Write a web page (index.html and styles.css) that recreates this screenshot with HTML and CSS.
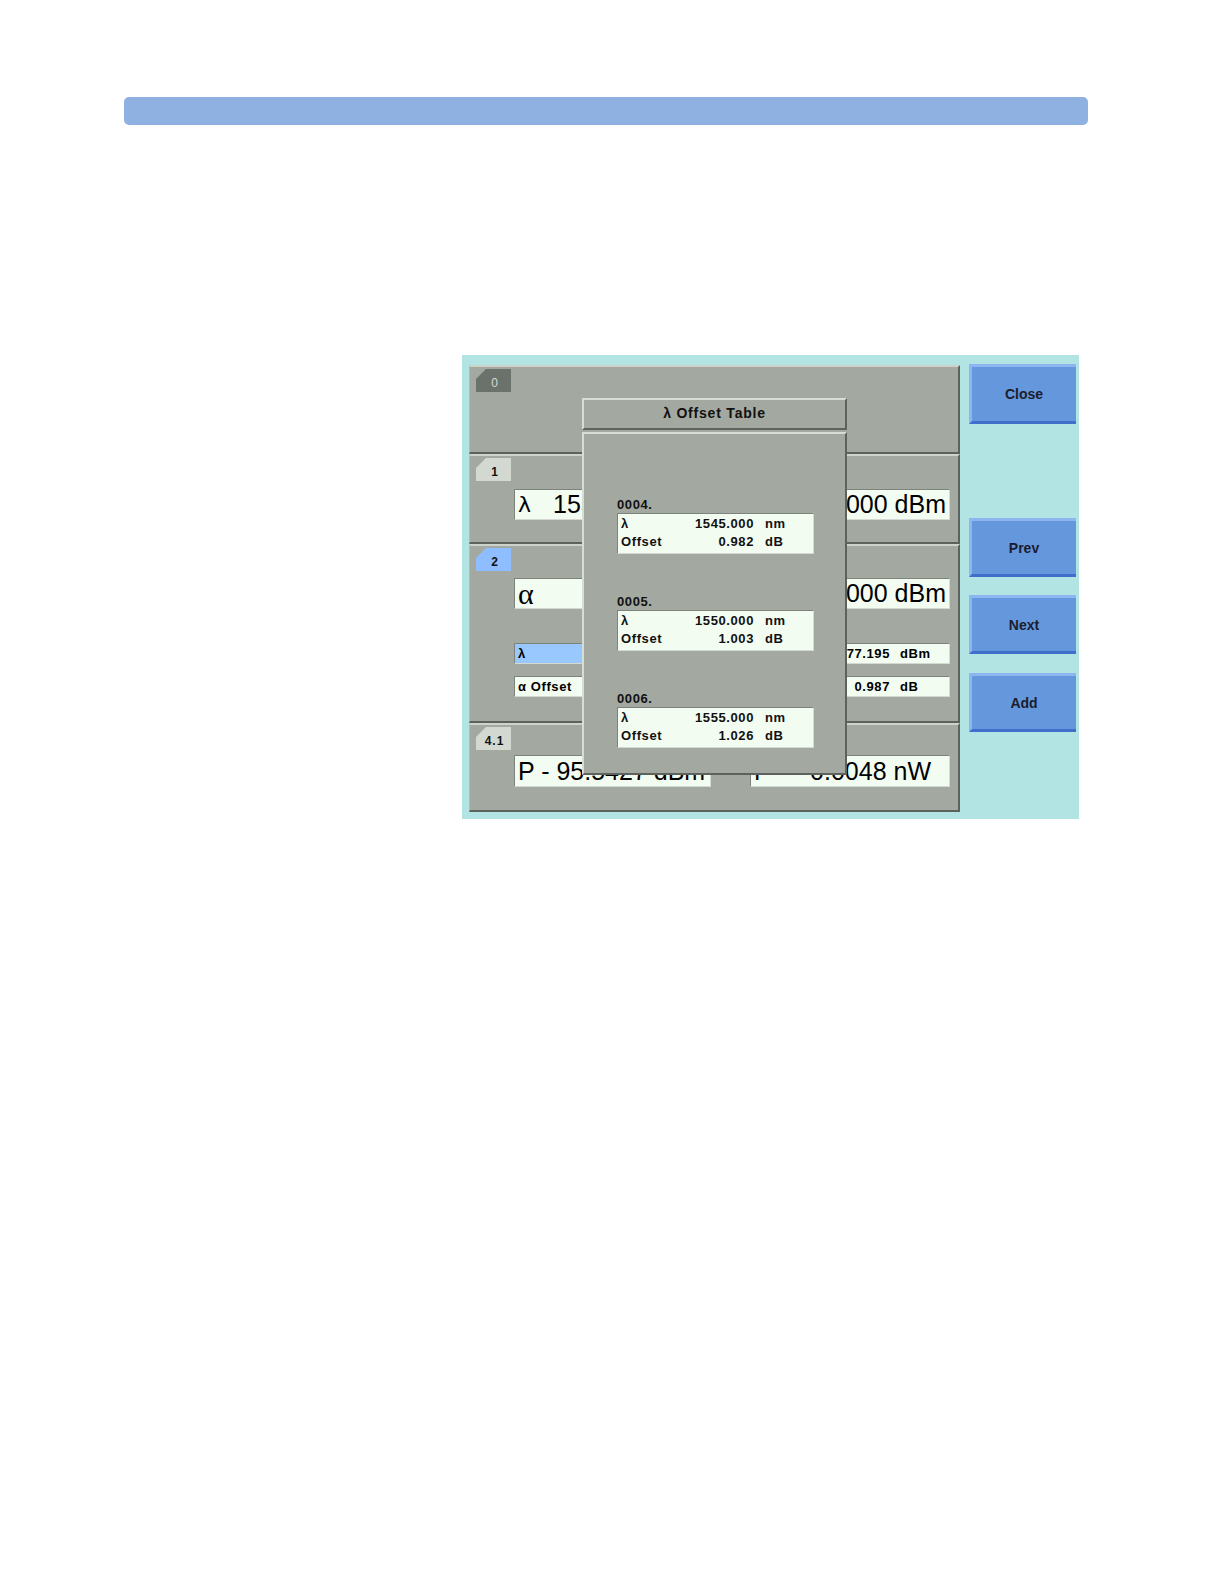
FILE: index.html
```html
<!DOCTYPE html>
<html>
<head>
<meta charset="utf-8">
<title>λ Offset Table</title>
<link rel="stylesheet" href="styles.css">
</head>
<body>
<div class="topbar"></div>

<div class="screen">
  <div class="panels">
    <div class="panel p0">
      <div class="tab tab-dark">0</div>
    </div>

    <div class="panel p1">
      <div class="tab tab-light">1</div>
      <div class="row big-row">
        <div class="box big"><span class="sym">λ</span><span class="val">1550.000 nm</span></div>
        <div class="box big right"><span class="val">-10.000 dBm</span></div>
      </div>
    </div>

    <div class="panel p2">
      <div class="tab tab-blue">2</div>
      <div class="row big-row">
        <div class="box big"><span class="sym alpha">α</span></div>
        <div class="box big right"><span class="val">-10.000 dBm</span></div>
      </div>
      <div class="row small-row first">
        <div class="box small sel"><span class="lbl">λ</span></div>
        <div class="box small vu"><span class="v">-77.195</span><span class="u">dBm</span></div>
      </div>
      <div class="row small-row">
        <div class="box small"><span class="lbl">α Offset</span></div>
        <div class="box small vu"><span class="v">0.987</span><span class="u">dB</span></div>
      </div>
    </div>

    <div class="panel p3">
      <div class="tab tab-light">4.1</div>
      <div class="row big-row b3">
        <div class="box big"><span class="val">P - 95.5427 dBm</span></div>
        <div class="box big split"><span class="val">P</span><span class="val">0.0048 nW</span></div>
      </div>
    </div>
  </div>

  <div class="softkeys">
    <div class="key close">Close</div>
    <div class="key prev">Prev</div>
    <div class="key next">Next</div>
    <div class="key add">Add</div>
  </div>

  <div class="modal">
    <div class="mtitle">λ Offset Table</div>
    <div class="mbody">
      <div class="entry">
        <div class="elabel">0004.</div>
        <div class="ebox">
          <span class="c1">λ</span><span class="c2">1545.000</span><span class="c3">nm</span>
          <span class="c1">Offset</span><span class="c2">0.982</span><span class="c3">dB</span>
        </div>
      </div>
      <div class="entry">
        <div class="elabel">0005.</div>
        <div class="ebox">
          <span class="c1">λ</span><span class="c2">1550.000</span><span class="c3">nm</span>
          <span class="c1">Offset</span><span class="c2">1.003</span><span class="c3">dB</span>
        </div>
      </div>
      <div class="entry">
        <div class="elabel">0006.</div>
        <div class="ebox">
          <span class="c1">λ</span><span class="c2">1555.000</span><span class="c3">nm</span>
          <span class="c1">Offset</span><span class="c2">1.026</span><span class="c3">dB</span>
        </div>
      </div>
    </div>
  </div>
</div>
</body>
</html>
```

FILE: styles.css
```css
html, body {
  margin: 0;
  padding: 0;
  background: #ffffff;
  font-family: "Liberation Sans", Arial, sans-serif;
}

.topbar {
  margin: 97px 0 0 124px;
  width: 964px;
  height: 28px;
  border-radius: 5px;
  background: #8eb1e1;
}

.screen {
  position: relative;
  margin: 230px 0 0 462px;
  width: 617px;
  height: 464px;
  box-sizing: border-box;
  padding: 10px 2px 0 7px;
  background: #b1e4e3;
  display: flex;
  gap: 9px;
}

.panels {
  width: 491px;
  display: flex;
  flex-direction: column;
}

.panel {
  box-sizing: border-box;
  background: #a3a8a0;
  border-top: 2px solid #cdd3cb;
  border-bottom: 2px solid #5d625d;
  border-right: 2px solid #5d625d;
  border-left: 1px solid #b4bab2;
  padding-left: 6px;
}

.p0 { height: 89px; }
.p1 { height: 90px; }
.p2 { height: 179px; }
.p3 { height: 89px; }

.tab {
  margin-top: 2px;
  width: 35px;
  height: 23px;
  box-sizing: border-box;
  padding: 7px 0 0 2px;
  text-align: center;
  font-weight: bold;
  font-size: 12px;
  line-height: 14px;
  color: #111;
  clip-path: polygon(10px 0, 100% 0, 100% 100%, 0 100%, 0 10px);
}

.tab-dark { background: #6b716b; color: #d6ddd6; font-weight: normal; }
.tab-light { background: #d3d9d1; }
.tab-blue { background: #8ebeff; }
.p3 .tab { letter-spacing: 1px; }

.row {
  display: flex;
  gap: 39px;
  padding-left: 38px;
}

.big-row { margin-top: 8px; }
.p2 .big-row { margin-top: 7px; }
.b3 { margin-top: 5px; }

.box {
  box-sizing: border-box;
  background: #f3fcf1;
  border-top: 1px solid #7c827c;
  border-left: 1px solid #7c827c;
  border-bottom: 1px solid #d4d9d2;
  border-right: 1px solid #d4d9d2;
  color: #000;
}

.box:first-child { width: 197px; }
.box:last-child { width: 200px; }

.big {
  height: 31px;
  display: flex;
  align-items: center;
  padding: 0 3px;
  font-size: 25px;
  white-space: nowrap;
  overflow: hidden;
}

.b3 .big { height: 32px; }

.big .sym {
  font-family: "DejaVu Sans", sans-serif;
  font-size: 22px;
  margin-right: 22px;
}

.big .sym.alpha {
  font-family: "Liberation Serif", serif;
  font-size: 30px;
}

.big.right { justify-content: flex-end; }

.big.split {
  justify-content: space-between;
  padding-right: 18px;
}

.small-row.first { margin-top: 34px; }
.small-row { margin-top: 12px; }

.small {
  height: 21px;
  display: flex;
  align-items: center;
  padding: 0 3px;
  font-size: 13px;
  font-weight: bold;
  letter-spacing: 0.6px;
  white-space: nowrap;
}

.small.sel { background: #99c8ff; }

.small.vu { padding: 0; }
.small.vu .v { width: 139px; text-align: right; }
.small.vu .u { margin-left: 10px; }

.softkeys {
  width: 107px;
  display: flex;
  flex-direction: column;
  margin-top: -1px;
}

.key {
  box-sizing: border-box;
  height: 59px;
  display: flex;
  align-items: center;
  justify-content: center;
  background: #6597dc;
  border-top: 3px solid #8cb6f2;
  border-left: 3px solid #8cb6f2;
  border-bottom: 3px solid #3f6ecb;
  color: #1b1d2e;
  font-weight: bold;
  font-size: 14px;
}

.key.close { height: 60px; }
.key.prev { margin-top: 94px; }
.key.next { margin-top: 18px; }
.key.add { margin-top: 19px; }

.modal {
  position: absolute;
  left: 120px;
  top: 43px;
  width: 265px;
  z-index: 2;
}

.mtitle {
  box-sizing: border-box;
  height: 32px;
  background: #a3a8a0;
  border-top: 2px solid #d6ddd4;
  border-left: 2px solid #d6ddd4;
  border-bottom: 2px solid #5d625d;
  border-right: 2px solid #5d625d;
  display: flex;
  align-items: center;
  justify-content: center;
  font-weight: bold;
  font-size: 14px;
  letter-spacing: 0.8px;
  color: #111;
  padding-bottom: 2px;
}

.mbody {
  box-sizing: border-box;
  margin-top: 2px;
  height: 343px;
  background: #a3a8a0;
  border-top: 2px solid #d6ddd4;
  border-left: 2px solid #d6ddd4;
  border-bottom: 2px solid #5d625d;
  border-right: 2px solid #5d625d;
  padding: 64px 0 0 33px;
  display: flex;
  flex-direction: column;
  gap: 41px;
}

.elabel {
  font-size: 13px;
  font-weight: bold;
  letter-spacing: 0.6px;
  line-height: 13px;
  margin-bottom: 2px;
  color: #111;
}

.ebox {
  box-sizing: border-box;
  width: 197px;
  height: 41px;
  background: #f3fcf1;
  border-top: 1px solid #7c827c;
  border-left: 1px solid #7c827c;
  border-bottom: 1px solid #d4d9d2;
  border-right: 1px solid #d4d9d2;
  padding: 1px 0 0 3px;
  display: grid;
  grid-template-columns: 60px 73px 58px;
  grid-auto-rows: 18px;
  font-size: 13px;
  font-weight: bold;
  letter-spacing: 0.6px;
  line-height: 18px;
  color: #111;
}

.ebox .c2 { text-align: right; }
.ebox .c3 { padding-left: 11px; }
```
